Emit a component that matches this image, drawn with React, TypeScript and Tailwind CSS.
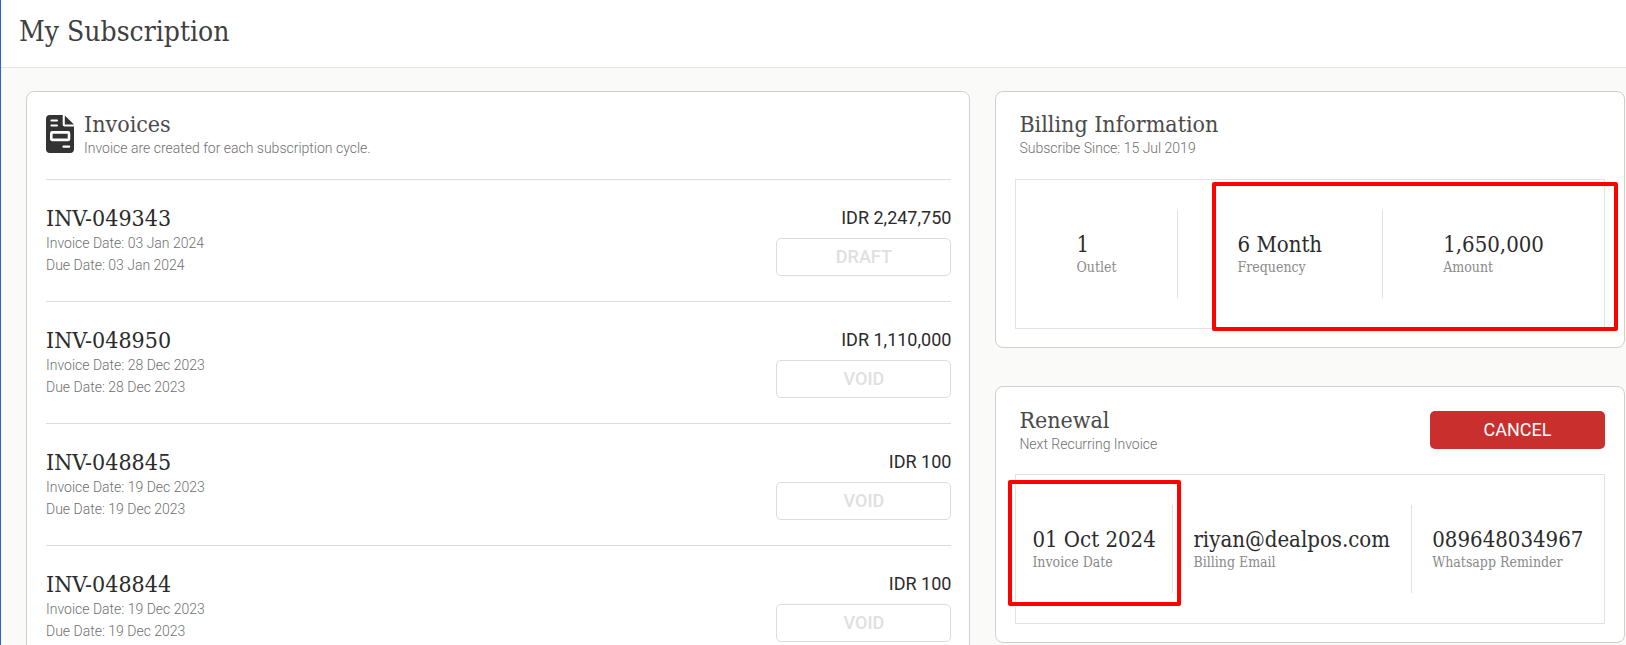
import type { ReactNode } from "react";

const slab = "font-['Roboto_Slab','DejaVu_Serif_Condensed','DejaVu_Serif',serif]";

type Invoice = { id: string; date: string; due: string; amount: string; status: string };

const invoices: Invoice[] = [
  { id: "INV-049343", date: "03 Jan 2024", due: "03 Jan 2024", amount: "IDR 2,247,750", status: "DRAFT" },
  { id: "INV-048950", date: "28 Dec 2023", due: "28 Dec 2023", amount: "IDR 1,110,000", status: "VOID" },
  { id: "INV-048845", date: "19 Dec 2023", due: "19 Dec 2023", amount: "IDR 100", status: "VOID" },
  { id: "INV-048844", date: "19 Dec 2023", due: "19 Dec 2023", amount: "IDR 100", status: "VOID" },
];

function InvoiceIcon() {
  return (
    <svg viewBox="0 0 28 38" className="mt-[5px] h-[38px] w-7 shrink-0" aria-hidden="true">
      <path
        fill="#333333"
        d="M4 0H16.7V9.6a2 2 0 0 0 2 2H28V34a4 4 0 0 1-4 4H4a4 4 0 0 1-4-4V4a4 4 0 0 1 4-4Z"
      />
      <path fill="#333333" d="M18.8 0.4 28 9.4H18.8Z" />
      <rect x="4.4" y="4.6" width="7.6" height="2" rx="1" fill="#ffffff" />
      <rect x="4.4" y="9.6" width="7.6" height="2" rx="1" fill="#ffffff" />
      <rect x="5.3" y="17.4" width="17.7" height="7.5" rx="1" fill="none" stroke="#ffffff" strokeWidth="2.6" />
      <rect x="16.4" y="30.6" width="7.8" height="2.1" rx="1" fill="#ffffff" />
    </svg>
  );
}

function InvoiceRow({ invoice }: { invoice: Invoice }) {
  return (
    <li className="flex justify-between border-t border-[#dcdcde] py-[25px]">
      <div>
        <h3 className={`${slab} text-[23px] leading-[27px] text-[#2b2b2b]`}>{invoice.id}</h3>
        <p className="text-sm leading-[22px] font-light text-[#6f6f6f]">Invoice Date: {invoice.date}</p>
        <p className="text-sm leading-[22px] font-light text-[#6f6f6f]">Due Date: {invoice.due}</p>
      </div>
      <div className="flex w-[175px] flex-col items-end">
        <p className="text-lg leading-[25px] text-[#2b2b2b]">{invoice.amount}</p>
        <button
          type="button"
          className="mt-2 h-[38px] w-full rounded-[5px] border border-[#dcdcdc] text-lg font-medium text-[#e0e0e0]"
        >
          {invoice.status}
        </button>
      </div>
    </li>
  );
}

function SectionTitle({ title, note }: { title: string; note: string }) {
  return (
    <div>
      <h2 className={`${slab} text-[23px] leading-7 text-[#4a4a4a]`}>{title}</h2>
      <p className="text-sm leading-5 font-light text-[#6f6f6f]">{note}</p>
    </div>
  );
}

type StatsProps = {
  items: { value: string; label: string }[];
  compactFirst?: boolean;
  children: ReactNode;
};

function Stats({ items, compactFirst = false, children }: StatsProps) {
  return (
    <div className="relative border border-[#e2e2e2] py-[30px]">
      <dl className={`${slab} flex divide-x divide-[#e2e2e2]`}>
        {items.map((item) => (
          <div
            key={item.label}
            className={`flex h-[88px] grow items-center justify-center ${compactFirst ? "first:grow-0 first:px-4" : ""}`}
          >
            <div className="flex flex-col-reverse">
              <dt className="text-sm leading-[18px] text-[#8a8a8a]">{item.label}</dt>
              <dd className="text-[22px] leading-[26px] text-[#2b2b2b]">{item.value}</dd>
            </div>
          </div>
        ))}
      </dl>
      {children}
    </div>
  );
}

export default function App() {
  return (
    <div className="flex h-screen flex-col overflow-hidden border-l border-[#2a62d8] bg-[#fafaf9] font-['Roboto',sans-serif]">
      <header className="border-b border-[#e4e4e6] bg-white px-[18px] pt-3 pb-[15px]">
        <h1 className={`${slab} text-[28px] leading-10 text-[#3f3f3f]`}>My Subscription</h1>
      </header>
      <main className="grid grid-cols-[3fr_2fr] items-start gap-[25px] pt-[23px] pr-px pl-[25px]">
        <section className="rounded-lg border border-[#cfcfcf] bg-white pt-[18px] pr-[18px] pl-[19px]">
          <div className="flex gap-[10px] pb-[21px]">
            <InvoiceIcon />
            <SectionTitle title="Invoices" note="Invoice are created for each subscription cycle." />
          </div>
          <ul>
            {invoices.map((invoice) => (
              <InvoiceRow key={invoice.id} invoice={invoice} />
            ))}
          </ul>
        </section>
        <div className="flex flex-col gap-[38px]">
          <section className="rounded-lg border border-[#cfcfcf] bg-white px-[19px] py-[18px]">
            <div className="px-1 pb-[21px]">
              <SectionTitle title="Billing Information" note="Subscribe Since: 15 Jul 2019" />
            </div>
            <Stats
              items={[
                { value: "1", label: "Outlet" },
                { value: "6 Month", label: "Frequency" },
                { value: "1,650,000", label: "Amount" },
              ]}
            >
              <div className="absolute top-[2px] -right-[14px] -bottom-[3px] w-[406px] rounded-xs border-4 border-[#ff0000]" />
            </Stats>
          </section>
          <section className="rounded-lg border border-[#cfcfcf] bg-white px-[19px] pt-[19px] pb-[18px]">
            <div className="flex items-start justify-between pb-5 pl-1">
              <SectionTitle title="Renewal" note="Next Recurring Invoice" />
              <button
                type="button"
                className="mt-[5px] h-[38px] w-[175px] rounded-[5px] bg-[#c92f2c] text-lg text-white"
              >
                CANCEL
              </button>
            </div>
            <Stats
              compactFirst
              items={[
                { value: "01 Oct 2024", label: "Invoice Date" },
                { value: "riyan@dealpos.com", label: "Billing Email" },
                { value: "089648034967", label: "Whatsapp Reminder" },
              ]}
            >
              <div className="absolute top-[5px] -left-[8px] h-[126px] w-[173px] rounded-xs border-4 border-[#ff0000]" />
            </Stats>
          </section>
        </div>
      </main>
    </div>
  );
}
